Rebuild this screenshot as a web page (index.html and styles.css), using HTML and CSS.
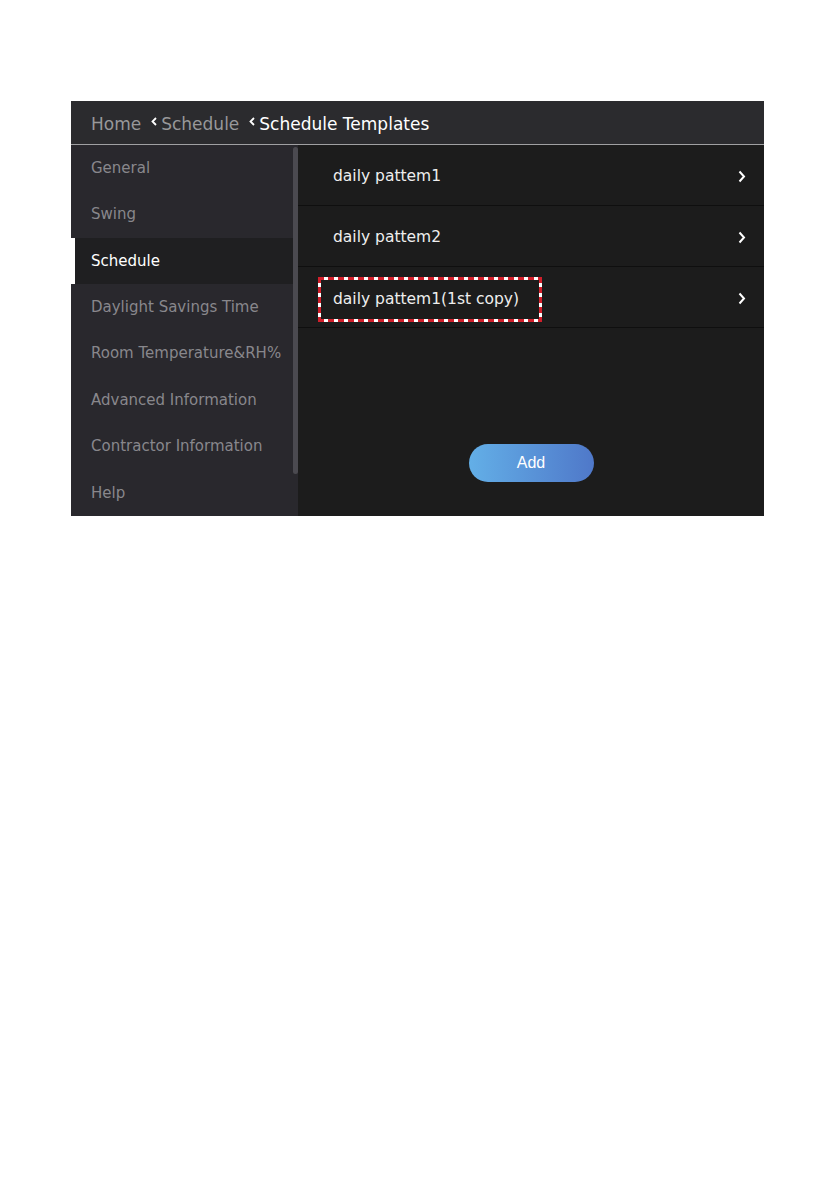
FILE: index.html
```html
<!DOCTYPE html>
<html lang="en">
<head>
    <meta charset="UTF-8">
    <title>Schedule Templates</title>
    <link rel="stylesheet" href="styles.css">
</head>
<body>

    <div class="panel">
        <!-- Breadcrumb -->
        <div class="header">
            <span class="crumb">Home</span>
            <svg class="crumb-arrow" width="6" height="9" viewBox="0 0 6 9"><path d="M5 1 L1.5 4.5 L5 8" fill="none" stroke="#fff" stroke-width="1.8"/></svg>
            <span class="crumb">Schedule</span>
            <svg class="crumb-arrow" width="6" height="9" viewBox="0 0 6 9"><path d="M5 1 L1.5 4.5 L5 8" fill="none" stroke="#fff" stroke-width="1.8"/></svg>
            <span class="crumb current">Schedule Templates</span>
        </div>

        <div class="main">
            <!-- Menu -->
            <div class="sidebar">
                <ul class="menu">
                    <li>General</li>
                    <li>Swing</li>
                    <li class="active">Schedule</li>
                    <li>Daylight Savings Time</li>
                    <li>Room Temperature&amp;RH%</li>
                    <li>Advanced Information</li>
                    <li>Contractor Information</li>
                    <li>Help</li>
                </ul>
                <div class="scroll-track">
                    <div class="scroll-thumb"></div>
                </div>
            </div>

            <!-- Templates -->
            <div class="content">
                <div class="row">
                    <span class="label">daily pattem1</span>
                    <svg class="arrow" width="8" height="13" viewBox="0 0 8 13"><path d="M1.5 1.5 L6 6.5 L1.5 11.5" fill="none" stroke="#fff" stroke-width="2"/></svg>
                </div>
                <div class="row">
                    <span class="label">daily pattem2</span>
                    <svg class="arrow" width="8" height="13" viewBox="0 0 8 13"><path d="M1.5 1.5 L6 6.5 L1.5 11.5" fill="none" stroke="#fff" stroke-width="2"/></svg>
                </div>
                <div class="row">
                    <span class="label marked">daily pattem1(1st copy)</span>
                    <svg class="arrow" width="8" height="13" viewBox="0 0 8 13"><path d="M1.5 1.5 L6 6.5 L1.5 11.5" fill="none" stroke="#fff" stroke-width="2"/></svg>
                </div>

                <button class="btn-add" type="button">Add</button>
            </div>
        </div>
    </div>

</body>
</html>
```

FILE: styles.css
```css
body {
    margin: 0;
    background-color: #fff;
    font-family: "DejaVu Sans", sans-serif;
}

.panel {
    width: 693px;
    height: 415px;
    margin: 101px 0 0 71px;
    display: flex;
    flex-direction: column;
    background-color: #1c1c1c;
}

.header {
    height: 39px;
    padding: 4px 0 0 20px;
    border-bottom: 1px solid #a0a0a2;
    background-color: #2b2b2e;
    display: flex;
    align-items: center;
    font-size: 17px;
}

.crumb {
    color: #98989a;
}

.crumb.current {
    color: #fff;
}

.crumb-arrow {
    margin: -6px 4px 0 10px;
}

.main {
    flex: 1;
    display: flex;
}

.sidebar {
    width: 227px;
    display: flex;
    background-color: #29282d;
}

.menu {
    list-style: none;
    margin: 0;
    padding: 0;
    width: 222px;
}

.menu li {
    height: 46.4px;
    line-height: 46px;
    padding-left: 20px;
    font-size: 15px;
    color: #88878c;
}

.menu li.active {
    border-left: 4px solid #fff;
    padding-left: 16px;
    background-color: #1f1f21;
    color: #fff;
}

.scroll-track {
    width: 5px;
}

.scroll-thumb {
    margin-top: 2px;
    height: 327px;
    border-radius: 3px;
    background-color: #4b4a50;
}

.content {
    flex: 1;
    display: flex;
    flex-direction: column;
}

.row {
    height: 57px;
    padding: 3px 18px 0 20px;
    border-bottom: 1px solid #0f0f0f;
    display: flex;
    align-items: center;
    justify-content: space-between;
}

.label {
    display: inline-block;
    height: 39px;
    line-height: 39px;
    padding: 3px 15px;
    font-size: 15.5px;
    color: #eeeeee;
}

/* annotation box: red / white dashes */
.label.marked {
    align-self: flex-start;
    margin-top: 7px;
    padding-right: 23px;
    background:
        repeating-linear-gradient(90deg, #d21f2b 0 6px, #fff 6px 10px) top left / 100% 3px no-repeat,
        repeating-linear-gradient(90deg, #d21f2b 0 6px, #fff 6px 10px) bottom left / 100% 3px no-repeat,
        repeating-linear-gradient(180deg, #d21f2b 0 6px, #fff 6px 10px) top left / 3px 100% no-repeat,
        repeating-linear-gradient(180deg, #d21f2b 0 6px, #fff 6px 10px) top right / 3px 100% no-repeat,
        #1c1c1c;
}

.arrow {
    display: block;
}

.btn-add {
    margin: auto auto 34px;
    width: 125px;
    height: 38px;
    border: none;
    border-radius: 19px;
    background: linear-gradient(90deg, #63afe7, #4f78c9);
    color: #fff;
    font-family: "Liberation Sans", Arial, sans-serif;
    font-size: 16px;
    cursor: pointer;
}
```
